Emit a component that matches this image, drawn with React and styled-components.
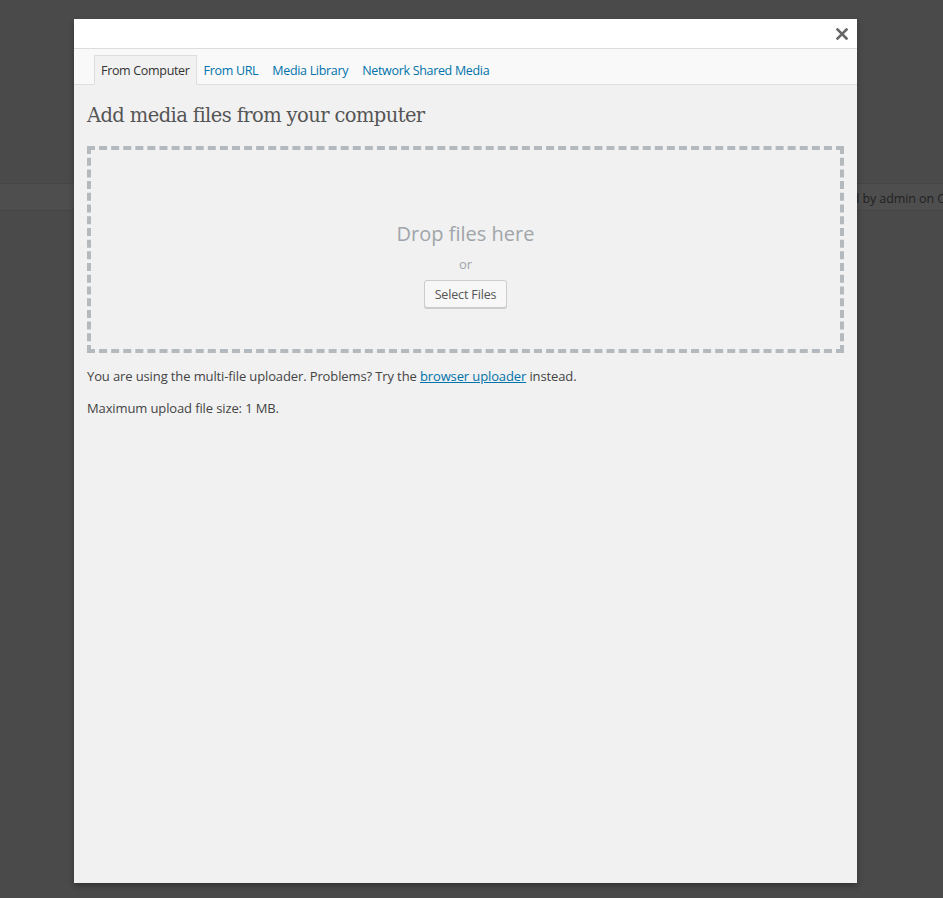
import React from "react";
import styled, { createGlobalStyle } from "styled-components";

const Global = createGlobalStyle`
  html, body { margin: 0; padding: 0; }
  body {
    background: #4a4a4a;
    font-family: "Open Sans", "Liberation Sans", sans-serif;
    font-size: 13px;
    color: #444;
  }
`;

const Page = styled.div`
  position: relative;
  height: 898px;
  overflow: hidden;
  padding-top: 183px;
  box-sizing: border-box;
`;

const BackRow = styled.div`
  height: 26px;
  background: #4e4e4e;
  border-top: 1px solid #454545;
  border-bottom: 1px solid #454545;
  display: flex;
  justify-content: flex-end;
  align-items: center;
  color: #222;
  font-size: 12.5px;
  white-space: nowrap;
  overflow: hidden;
`;

const BackText = styled.span`
  margin-right: -14px;
  padding-top: 2px;
  letter-spacing: -0.1px;
`;

const Dialog = styled.div`
  position: absolute;
  left: 74px;
  top: 19px;
  width: 783px;
  height: 864px;
  background: #f1f1f1;
  box-shadow: 0 3px 6px rgba(0, 0, 0, 0.3);
  display: flex;
  flex-direction: column;
`;

const Header = styled.div`
  height: 29px;
  background: #fff;
  border-bottom: 1px solid #ddd;
  display: flex;
  justify-content: flex-end;
  align-items: center;
  padding-right: 8px;
`;

const Close = styled.button`
  border: 0;
  background: none;
  padding: 0;
  width: 14px;
  height: 14px;
  display: flex;
  align-items: center;
  justify-content: center;
  cursor: pointer;
  margin-top: 1px;
`;

const TabBar = styled.div`
  height: 29px;
  padding: 6px 0 0 20px;
  background: #f9f9f9;
  border-bottom: 1px solid #dedede;
  display: flex;
  align-items: flex-end;
`;

const Tab = styled.a`
  display: flex;
  align-items: center;
  height: 30px;
  padding: 0 6px;
  box-sizing: border-box;
  margin-bottom: -1px;
  color: ${(p) => (p.$active ? "#333" : "#0073aa")};
  background: ${(p) => (p.$active ? "#f1f1f1" : "transparent")};
  border: 1px solid ${(p) => (p.$active ? "#dedede" : "transparent")};
  border-bottom: 1px solid ${(p) => (p.$active ? "#f1f1f1" : "transparent")};
  text-decoration: none;
  font-size: 12.5px;
  letter-spacing: -0.32px;
  cursor: pointer;
`;

const Body = styled.div`
  padding: 0 13px;
  flex: 1;
`;

const Title = styled.h3`
  margin: 17px 0 0;
  font-family: "DejaVu Serif", Georgia, serif;
  font-weight: normal;
  font-size: 19.5px;
  line-height: 28px;
  color: #555;
  letter-spacing: -0.6px;
`;

const DropZone = styled.div`
  margin-top: 16px;
  height: 207px;
  box-sizing: border-box;
  border: 4px dashed #b4b9be;
  display: flex;
  flex-direction: column;
  align-items: center;
  padding-top: 70px;
`;

const DropInfo = styled.p`
  margin: 0;
  font-size: 20px;
  line-height: 28px;
  color: #a0a5aa;
`;

const Or = styled.p`
  margin: 8px 0 0;
  font-size: 13px;
  line-height: 16px;
  color: #a0a5aa;
`;

const Button = styled.button`
  margin-top: 8px;
  height: 28px;
  padding: 0 10px;
  font-family: "Open Sans", "Liberation Sans", sans-serif;
  font-size: 12.5px;
  letter-spacing: -0.15px;
  color: #555;
  background: #f7f7f7;
  border: 1px solid #ccc;
  border-radius: 3px;
  box-shadow: 0 1px 0 #ccc;
  cursor: pointer;
`;

const Note = styled.p`
  margin: ${(p) => p.$top}px 0 0;
  font-size: 13px;
  line-height: 20px;
  letter-spacing: -0.12px;
  color: #444;
`;

const Link = styled.a`
  color: #0073aa;
  text-decoration: underline;
`;

export default function App() {
  return (
    <>
      <Global />
      <Page>
        <BackRow>
          <BackText>d by admin on Oct</BackText>
        </BackRow>
        <Dialog>
          <Header>
            <Close aria-label="Close">
              <svg width="12" height="12" viewBox="0 0 12 12">
                <path d="M1.5 1.5 L10.5 10.5 M10.5 1.5 L1.5 10.5" stroke="#666" strokeWidth="2.6" strokeLinecap="square" />
              </svg>
            </Close>
          </Header>
          <TabBar>
            <Tab $active>From Computer</Tab>
            <Tab>From URL</Tab>
            <Tab>Media Library</Tab>
            <Tab>Network Shared Media</Tab>
          </TabBar>
          <Body>
            <Title>Add media files from your computer</Title>
            <DropZone>
              <DropInfo>Drop files here</DropInfo>
              <Or>or</Or>
              <Button>Select Files</Button>
            </DropZone>
            <Note $top={13}>
              You are using the multi-file uploader. Problems? Try the <Link>browser uploader</Link> instead.
            </Note>
            <Note $top={12}>Maximum upload file size: 1 MB.</Note>
          </Body>
        </Dialog>
      </Page>
    </>
  );
}
